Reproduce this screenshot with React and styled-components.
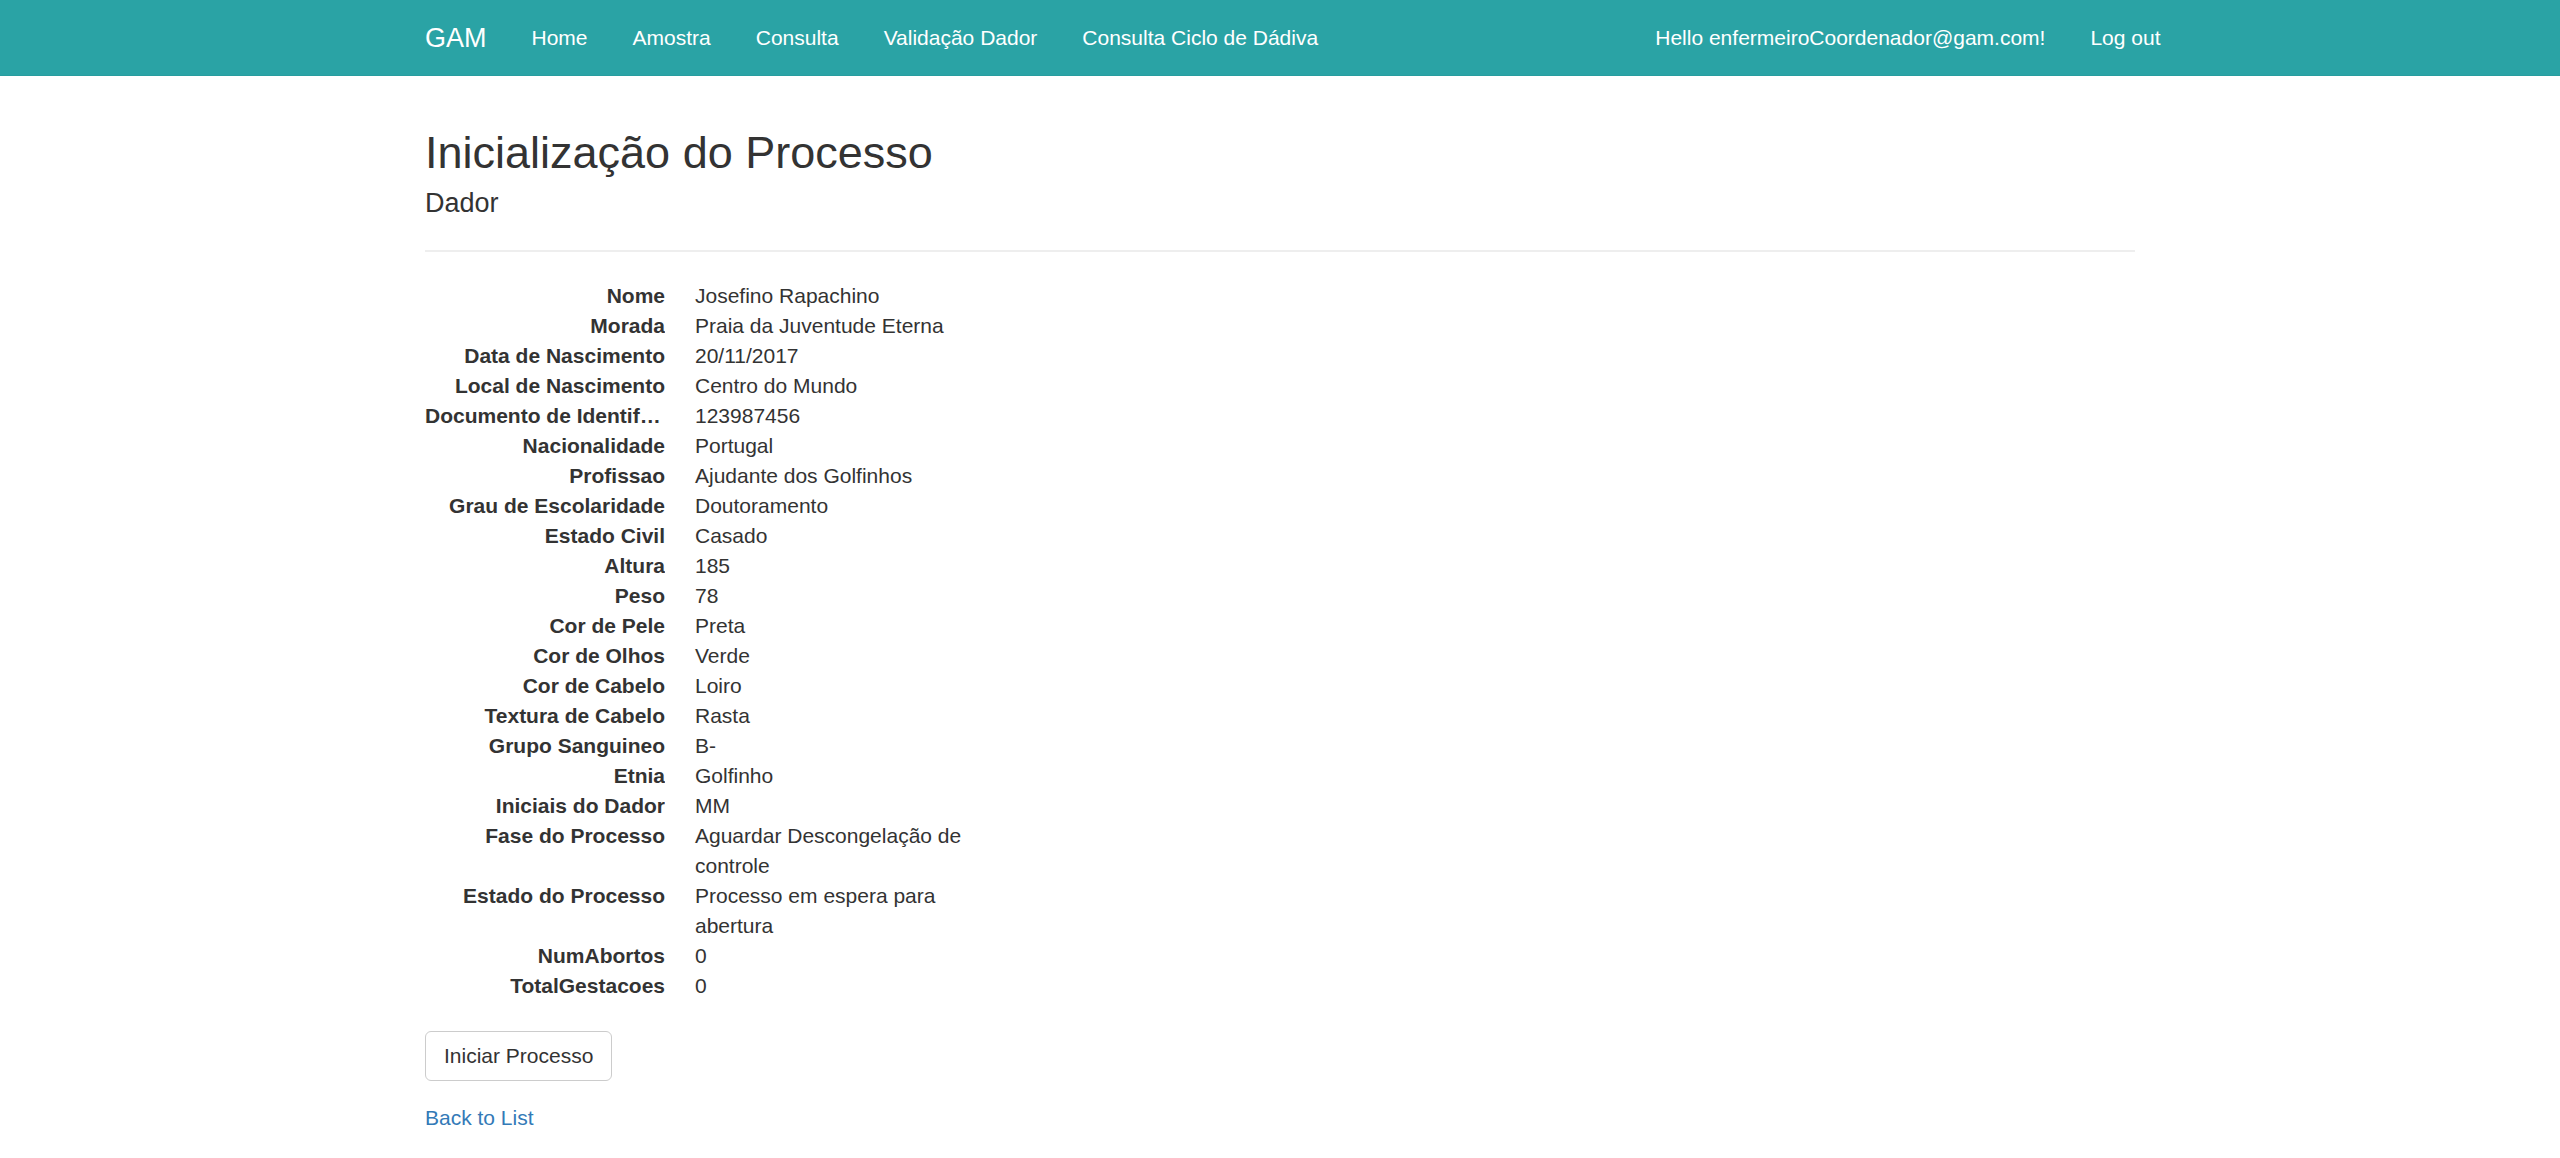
import React from 'react';
import styled, { createGlobalStyle } from 'styled-components';

const GlobalStyle = createGlobalStyle`
  body {
    margin: 0;
    background: #fff;
    color: #333;
    font-family: "Liberation Sans", Arial, Helvetica, sans-serif;
    font-size: 21px;
    line-height: 30px;
  }
  * { box-sizing: border-box; }
`

const Container = styled.div`
  width: 1755px;
  margin: 0 auto;
  padding: 0 22.5px;
`

const Navbar = styled.nav`
  background: #2aa3a5;
  border-bottom: 1px solid #289d9f;
  min-height: 76px;
`

const NavInner = styled(Container)`
  display: flex;
  align-items: stretch;
`

const Brand = styled.a`
  display: block;
  margin-left: -22.5px;
  padding: 22.5px;
  font-size: 27px;
  line-height: 30px;
  color: #fff;
  text-decoration: none;
`

const NavList = styled.ul`
  display: flex;
  list-style: none;
  margin: 0;
  padding: 0;
  margin-left: ${props => props.right ? 'auto' : '0'};
  margin-right: ${props => props.right ? '-48px' : '0'};
`

const NavLink = styled.a`
  display: block;
  padding: 22.5px;
  color: #fff;
  line-height: 30px;
  text-decoration: none;
`

const Main = styled(Container)`
  padding-top: 52px;
`

const Title = styled.h2`
  margin: 0 0 11.5px;
  font-size: 45px;
  font-weight: 400;
  line-height: 1.1;
`

const Subtitle = styled.h4`
  margin: 0;
  font-size: 27px;
  font-weight: 400;
  line-height: 1.1;
`

const Divider = styled.hr`
  margin: 31.5px 0 29px;
  border: 0;
  border-top: 2px solid #eee;
`

const DetailsCol = styled.div`
  width: 540px;
`

const DetailsList = styled.dl`
  display: grid;
  grid-template-columns: 240px 1fr;
  column-gap: 30px;
  margin: 0 0 30px;
`

const Term = styled.dt`
  font-weight: 700;
  text-align: right;
  white-space: nowrap;
  overflow: hidden;
  text-overflow: ellipsis;
`

const Value = styled.dd`
  margin: 0;
`

const Button = styled.button`
  display: inline-block;
  padding: 9px 18px;
  border: 1px solid #ccc;
  border-radius: 6px;
  background: #fff;
  color: #333;
  font-family: inherit;
  font-size: 21px;
  line-height: 30px;
  cursor: pointer;
`

const Footer = styled.p`
  margin: 22px 0 0;
`

const BackLink = styled.a`
  color: #337ab7;
  text-decoration: none;
`

const fields = [
  ['Nome', 'Josefino Rapachino'],
  ['Morada', 'Praia da Juventude Eterna'],
  ['Data de Nascimento', '20/11/2017'],
  ['Local de Nascimento', 'Centro do Mundo'],
  ['Documento de Identificação', '123987456'],
  ['Nacionalidade', 'Portugal'],
  ['Profissao', 'Ajudante dos Golfinhos'],
  ['Grau de Escolaridade', 'Doutoramento'],
  ['Estado Civil', 'Casado'],
  ['Altura', '185'],
  ['Peso', '78'],
  ['Cor de Pele', 'Preta'],
  ['Cor de Olhos', 'Verde'],
  ['Cor de Cabelo', 'Loiro'],
  ['Textura de Cabelo', 'Rasta'],
  ['Grupo Sanguineo', 'B-'],
  ['Etnia', 'Golfinho'],
  ['Iniciais do Dador', 'MM'],
  ['Fase do Processo', 'Aguardar Descongelação de controle'],
  ['Estado do Processo', 'Processo em espera para abertura'],
  ['NumAbortos', '0'],
  ['TotalGestacoes', '0'],
];

const links = ['Home', 'Amostra', 'Consulta', 'Validação Dador', 'Consulta Ciclo de Dádiva'];

const App = () => {
  return (
    <>
      <GlobalStyle />
      <Navbar>
        <NavInner>
          <Brand href="#">GAM</Brand>
          <NavList>
            {links.map(l => (
              <li key={l}><NavLink href="#">{l}</NavLink></li>
            ))}
          </NavList>
          <NavList right>
            <li><NavLink href="#">Hello enfermeiroCoordenador@gam.com!</NavLink></li>
            <li><NavLink href="#">Log out</NavLink></li>
          </NavList>
        </NavInner>
      </Navbar>
      <Main>
        <Title>Inicialização do Processo</Title>
        <Subtitle>Dador</Subtitle>
        <Divider />
        <DetailsCol>
          <DetailsList>
            {fields.map(([k, v]) => (
              <React.Fragment key={k}>
                <Term>{k}</Term>
                <Value>{v}</Value>
              </React.Fragment>
            ))}
          </DetailsList>
        </DetailsCol>
        <Button type="button">Iniciar Processo</Button>
        <Footer>
          <BackLink href="#">Back to List</BackLink>
        </Footer>
      </Main>
    </>
  )
}

export default App;
